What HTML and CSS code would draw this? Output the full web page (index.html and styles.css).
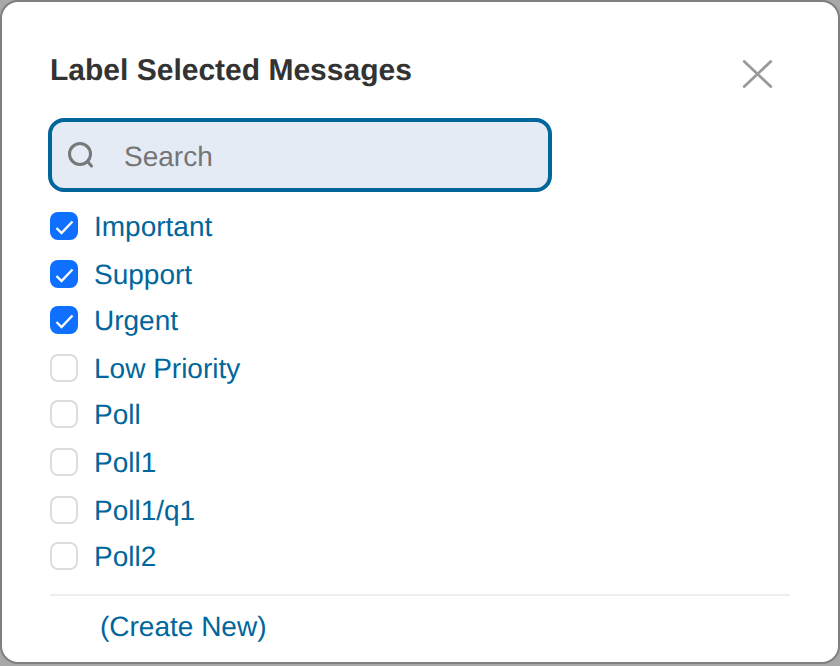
FILE: index.html
```html
<!DOCTYPE html>
<html lang="en">
<head>
  <meta charset="UTF-8">
  <meta name="viewport" content="width=device-width, initial-scale=1.0">
  <title>Label Selected Messages</title>
  <link rel="stylesheet" href="styles.css">
</head>
<body>
  <div class="modal">
    <div class="modal-header">
      <div class="modal-title">Label Selected Messages</div>
      <button class="close-btn" aria-label="Close">
        <svg width="32" height="32" viewBox="0 0 32 32">
          <path d="M2.25 3.5 L28.75 28.5 M28.75 3.5 L2.25 28.5" fill="none" stroke="#999" stroke-width="2.8" stroke-linecap="round"/>
        </svg>
      </button>
    </div>

    <div class="search-box">
      <svg class="search-icon" width="28" height="28" viewBox="0 0 28 28">
        <circle cx="12" cy="13" r="10.5" fill="none" stroke="#777" stroke-width="3"/>
        <path d="M20 21 L23.5 25" fill="none" stroke="#777" stroke-width="3" stroke-linecap="round"/>
      </svg>
      <span class="search-placeholder">Search</span>
    </div>

    <div class="label-list">
      <div class="label-row gap-after">
        <span class="checkbox checked">
          <svg width="28" height="28" viewBox="0 0 28 28"><path d="M6.5 16 L11.5 21 L22.5 9.5" fill="none" stroke="#fff" stroke-width="2.4"/></svg>
        </span>
        <span class="label-name">Important</span>
      </div>
      <div class="label-row">
        <span class="checkbox checked">
          <svg width="28" height="28" viewBox="0 0 28 28"><path d="M6.5 16 L11.5 21 L22.5 9.5" fill="none" stroke="#fff" stroke-width="2.4"/></svg>
        </span>
        <span class="label-name">Support</span>
      </div>
      <div class="label-row gap-after">
        <span class="checkbox checked">
          <svg width="28" height="28" viewBox="0 0 28 28"><path d="M6.5 16 L11.5 21 L22.5 9.5" fill="none" stroke="#fff" stroke-width="2.4"/></svg>
        </span>
        <span class="label-name">Urgent</span>
      </div>
      <div class="label-row">
        <span class="checkbox"></span>
        <span class="label-name">Low Priority</span>
      </div>
      <div class="label-row gap-after">
        <span class="checkbox"></span>
        <span class="label-name">Poll</span>
      </div>
      <div class="label-row gap-after">
        <span class="checkbox"></span>
        <span class="label-name">Poll1</span>
      </div>
      <div class="label-row">
        <span class="checkbox"></span>
        <span class="label-name">Poll1/q1</span>
      </div>
      <div class="label-row">
        <span class="checkbox"></span>
        <span class="label-name">Poll2</span>
      </div>
    </div>

    <div class="create-new">(Create New)</div>
  </div>
</body>
</html>
```

FILE: styles.css
```css
* {
  margin: 0;
  padding: 0;
  box-sizing: border-box;
}

html, body {
  height: 666px;
  overflow: hidden;
}

body {
  font-family: "Liberation Sans", Arial, sans-serif;
  background: #a8a8a8;
  color: #333;
  text-rendering: geometricPrecision;
}

.modal {
  width: 840px;
  height: 664px;
  background: #fff;
  border: 2px solid #7f7f7f;
  border-radius: 18px;
  padding: 0 48px;
}

.modal-header {
  display: flex;
  justify-content: space-between;
  align-items: flex-start;
  height: 116px;
  padding-top: 48px;
}

.modal-title {
  font-size: 30px;
  font-weight: 700;
  line-height: 42px;
  color: #333;
}

.close-btn {
  background: none;
  border: none;
  display: flex;
  margin: 8px 16px 0 0;
}

.search-box {
  display: flex;
  align-items: center;
  width: 504px;
  height: 74px;
  margin-left: -2px;
  padding-left: 16px;
  background: #e4ebf5;
  border: 4px solid #00669b;
  border-radius: 16px;
}

.search-icon {
  flex: none;
  margin-right: 28px;
}

.search-placeholder {
  font-size: 28px;
  color: #757575;
  padding-top: 4px;
}

.label-list {
  padding-top: 11px;
  padding-bottom: 15px;
  border-bottom: 2px solid #eee;
}

.label-row {
  display: flex;
  align-items: center;
  gap: 16px;
  height: 46px;
}

.label-row.gap-after {
  margin-bottom: 2px;
}

.checkbox {
  flex: none;
  display: block;
  width: 28px;
  height: 28px;
  border: 2px solid #ddd;
  border-radius: 8px;
  background: #fff;
}

.checkbox.checked {
  border: none;
  background: #0f6fff;
}

.checkbox svg {
  display: block;
}

.label-name {
  font-size: 28px;
  line-height: 34px;
  color: #00669b;
  padding-top: 2px;
}

.create-new {
  font-size: 28px;
  line-height: 34px;
  color: #00669b;
  padding: 14px 0 0 50px;
}
```
